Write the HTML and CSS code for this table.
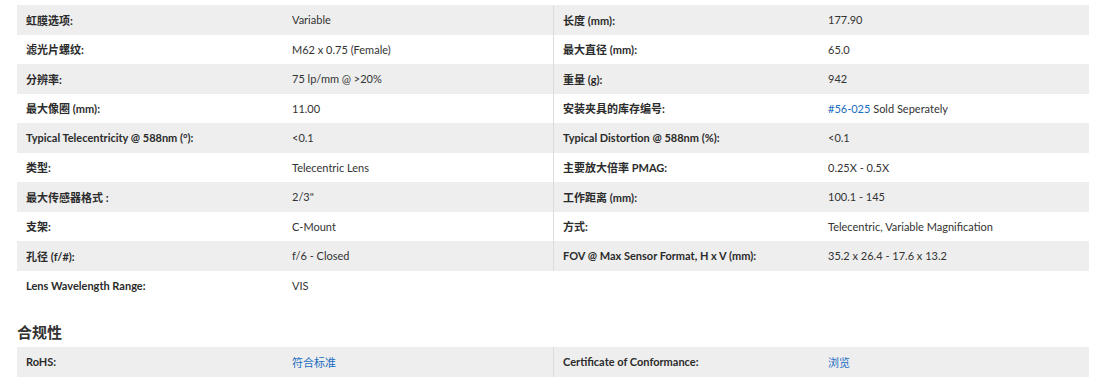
FILE: index.html
```html
<!DOCTYPE html>
<html lang="zh">
<head>
<meta charset="utf-8">
<title>Specs</title>
<link rel="stylesheet" href="styles.css">
</head>
<body>
<div class="page">
  <div class="specs">
    <div class="half">
      <div class="row"><div class="label">虹膜选项:</div><div class="value">Variable</div></div>
      <div class="row"><div class="label">滤光片螺纹:</div><div class="value">M62 x 0.75 (Female)</div></div>
      <div class="row"><div class="label">分辨率:</div><div class="value">75 lp/mm @ &gt;20%</div></div>
      <div class="row"><div class="label">最大像圈 (mm):</div><div class="value">11.00</div></div>
      <div class="row"><div class="label">Typical Telecentricity @ 588nm (°):</div><div class="value">&lt;0.1</div></div>
      <div class="row"><div class="label">类型:</div><div class="value">Telecentric Lens</div></div>
      <div class="row"><div class="label">最大传感器格式 :</div><div class="value">2/3"</div></div>
      <div class="row"><div class="label">支架:</div><div class="value">C-Mount</div></div>
      <div class="row"><div class="label">孔径 (f/#):</div><div class="value">f/6 - Closed</div></div>
      <div class="row"><div class="label">Lens Wavelength Range:</div><div class="value">VIS</div></div>
    </div>
    <div class="half right">
      <div class="row"><div class="label">长度 (mm):</div><div class="value">177.90</div></div>
      <div class="row"><div class="label">最大直径 (mm):</div><div class="value">65.0</div></div>
      <div class="row"><div class="label">重量 (g):</div><div class="value">942</div></div>
      <div class="row"><div class="label">安装夹具的库存编号:</div><div class="value"><a class="link" href="#">#56-025</a> Sold Seperately</div></div>
      <div class="row"><div class="label">Typical Distortion @ 588nm (%):</div><div class="value">&lt;0.1</div></div>
      <div class="row"><div class="label">主要放大倍率 PMAG:</div><div class="value">0.25X - 0.5X</div></div>
      <div class="row"><div class="label">工作距离 (mm):</div><div class="value">100.1 - 145</div></div>
      <div class="row"><div class="label">方式:</div><div class="value">Telecentric, Variable Magnification</div></div>
      <div class="row"><div class="label">FOV @ Max Sensor Format, H x V (mm):</div><div class="value">35.2 x 26.4 - 17.6 x 13.2</div></div>
    </div>
  </div>
  <h2 class="section-title">合规性</h2>
  <div class="specs">
    <div class="half">
      <div class="row"><div class="label">RoHS:</div><div class="value"><a class="link" href="#">符合标准</a></div></div>
    </div>
    <div class="half right">
      <div class="row"><div class="label">Certificate of Conformance:</div><div class="value"><a class="link" href="#">浏览</a></div></div>
    </div>
  </div>
</div>
</body>
</html>
```

FILE: styles.css
```css
html, body {
  margin: 0;
  padding: 0;
  background: #ffffff;
}
body {
  font-family: "Lato", "Noto Sans CJK SC", sans-serif;
  font-size: 11px;
  color: #333333;
}
.page {
  padding: 5px 12px 0 17px;
}
.specs {
  display: grid;
  grid-template-columns: 536px 1fr;
  align-items: start;
}
.half {
  display: flex;
  flex-direction: column;
}
.half.right {
  border-left: 1px solid #dcdcdc;
}
.row {
  display: grid;
  grid-template-columns: 266px 1fr;
  height: 29.5px;
  align-items: center;
}
.half.right .row {
  grid-template-columns: 265px 1fr;
}
.row:nth-child(odd) {
  background: #eeeeee;
}
.label {
  padding-left: 9px;
  font-weight: 700;
  color: #2b2b2b;
}
.value {
  padding-left: 9px;
  color: #333333;
}
.link {
  color: #1a6dc2;
  text-decoration: none;
}
.section-title {
  margin: 23px 0 6px 0;
  font-size: 15px;
  font-weight: 700;
  line-height: 18px;
  color: #333333;
}
```
